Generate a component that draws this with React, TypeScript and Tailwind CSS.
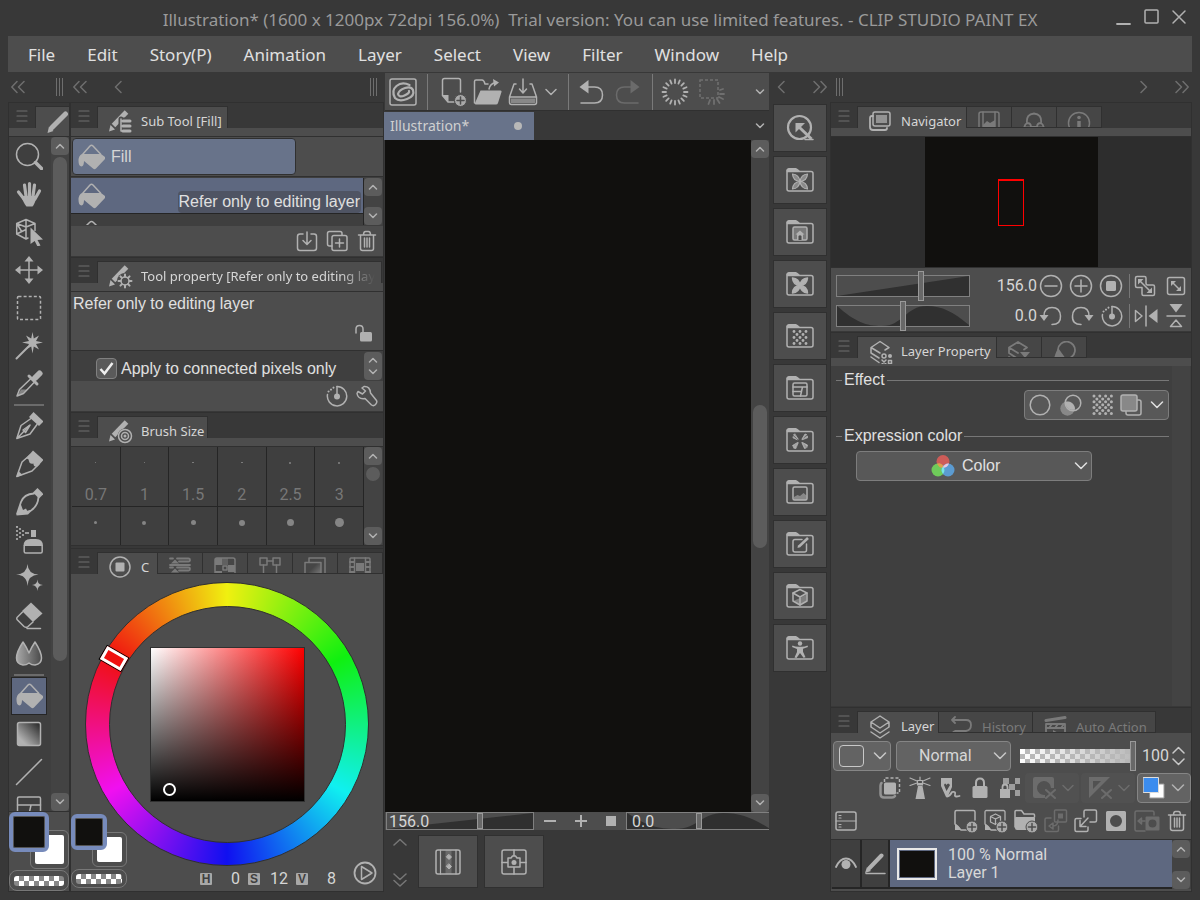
import React from 'react';

type IconProps = { w?: number; h?: number; className?: string; children: React.ReactNode };

const Icon = ({ w = 28, h = 28, className = '', children }: IconProps) => (
  <svg
    width={w}
    height={h}
    viewBox={`0 0 ${w} ${h}`}
    fill="none"
    stroke="currentColor"
    strokeWidth="1.5"
    strokeLinecap="round"
    strokeLinejoin="round"
    className={`shrink-0 ${className}`}
    aria-hidden="true"
  >
    {children}
  </svg>
);

const solid = { fill: 'currentColor', stroke: 'none' };

/* ---------- small glyphs ---------- */

const Chevron = ({ dir }: { dir: 'up' | 'down' }) => (
  <Icon w={10} h={6}>
    <path d={dir === 'up' ? 'M1.5 5 5 1.5 8.5 5' : 'M1.5 1 5 4.5 8.5 1'} />
  </Icon>
);

const BigChevron = () => (
  <Icon w={14} h={8}>
    <path d="M1.5 1 7 6.5 12.5 1" />
  </Icon>
);

const Left = () => <Icon w={8} h={14}><path d="M7 1.5 1.5 7 7 12.5" /></Icon>;
const Right = () => <Icon w={8} h={14}><path d="M1 1.5 6.5 7 1 12.5" /></Icon>;
const DoubleLeft = () => <Icon w={14} h={14}><path d="M6 1.5.8 7 6 12.5M13 1.5 7.5 7 13 12.5" /></Icon>;
const DoubleRight = () => <Icon w={14} h={14}><path d="M1 1.5 6.5 7 1 12.5M8 1.5 13.2 7 8 12.5" /></Icon>;
const Grip = () => (
  <Icon w={8} h={18}><path d="M.5 0v18M3.5 0v18M6.5 0v18" strokeWidth="1" strokeLinecap="butt" /></Icon>
);

const Plus = ({ x, y }: { x: number; y: number }) => (
  <g>
    <circle cx={x} cy={y} r="6" stroke="#4d4d4d" fill="#a8a8a8" strokeWidth="1" />
    <path d={`M${x - 3.5} ${y}h7M${x} ${y - 3.5}v7`} stroke="#4d4d4d" />
  </g>
);

const Dots = ({ x, y, step, n, r = 1.4 }: { x: number; y: number; step: number; n: number; r?: number }) => {
  const out = [];
  for (let i = 0; i < n; i++) {
    for (let j = 0; j < n; j++) {
      if ((i + j) % 2 === 0) out.push(<circle key={`${i}-${j}`} cx={x + i * step} cy={y + j * step} r={r} {...solid} />);
    }
  }
  return <>{out}</>;
};

const Bucket = () => (
  <Icon>
    <path d="M5.5 11.5 13 3q1.500-1.500 3 0l7.500 8" />
    <path d="M5 11h19l4 3q1 1 0 2L19 25.500q-1.500 1.500-3 0L7 18q0 5-2.500 5.500Q1.500 23 1.500 18 1.500 12.500 5 11z" {...solid} />
  </Icon>
);

const BucketTop = () => (
  <Icon h={6}><path d="M9 6l3.500-3.500q2-2 4 0L20 6" /></Icon>
);

/* ---------- tools ---------- */

const rays = (cx: number, cy: number, a: number, b: number, n: number) =>
  Array.from({ length: n }, (_, i) => {
    const t = (i * 2 * Math.PI) / n;
    return `M${cx + a * Math.cos(t)} ${cy + a * Math.sin(t)}L${cx + b * Math.cos(t)} ${cy + b * Math.sin(t)}`;
  }).join('');

const toolGroups: { name: string; icon: React.ReactNode; active?: boolean }[][] = [
  [
    { name: 'Zoom', icon: <Icon><circle cx="12.5" cy="12.5" r="11" /><path d="m20.500 20.500 6 6" strokeWidth="3.5" /></Icon> },
    {
      name: 'Move view',
      icon: (
        <Icon>
          <path d="M3.500 12 9 19M9.500 5l1.500 11M14.500 3.500V16M19.500 5 18 16M24.500 11 20 19" strokeWidth="3.2" />
          <path d="M7 16h14.500q-1 7-4 10.500h-6Q8.500 23 6 16z" {...solid} />
        </Icon>
      ),
    },
    {
      name: 'Operation',
      icon: (
        <Icon>
          <path d="m11 1.500 9 4v7M11 1.500l-9.300 4V16L11 21l2-1M1.700 5.500 11 9l9-3.500M11 1.500V20M1.700 16 11 11.500M1.700 5.500l5 8" />
          <path d="m15.500 9.500 12.500 12-5.500.5 3 5.500-3 1-2.800-5.500-4.200 3z" {...solid} />
        </Icon>
      ),
    },
    {
      name: 'Move layer',
      icon: (
        <Icon>
          <path d="M14 4v20M4 14h20" />
          <path d="m14 0 4.500 5.500h-9zM14 28l4.500-5.500h-9zM0 14l5.500-4.500v9zM28 14l-5.500-4.500v9z" {...solid} />
        </Icon>
      ),
    },
    { name: 'Selection area', icon: <Icon><rect x="2.5" y="2.5" width="23" height="23" rx="1" strokeDasharray="3 2.11" strokeLinecap="butt" /></Icon> },
    {
      name: 'Auto select',
      icon: (
        <Icon>
          <path d="M1.500 26.500 13 15" strokeWidth="2" />
          <path d="m17.500 0 1.300 6.500L24 3.500 21 9l7.500 1.500L21 12l3 5.500-5.200-3-1.300 7-1.300-7-5.200 3 3-5.500-7-1.500L14 9l-3-5.500 5.200 3z" {...solid} />
        </Icon>
      ),
    },
    {
      name: 'Eyedropper',
      icon: (
        <Icon>
          <path d="M16 8.500 4.500 19.500 2 26l6.500-2.500L19.500 12" />
          <path d="M6 19.500h7L8 24l-5.500 1.500z" {...solid} opacity=".6" />
          <path d="m14 6 8 8M19 9l5.500-5.500" strokeWidth="3" />
          <path d="m20 8 4.500-4.500" strokeWidth="6" />
        </Icon>
      ),
    },
  ],
  [
    {
      name: 'Pen',
      icon: (
        <Icon>
          <path d="M16 6.500 6 13.500 1.800 26.500 15 22l7-9.500M2 26.500 14 14" />
          <path d="m8 18 7-5-4.500 7.500z" />
          <path d="m18.500 0 10 9.500-4.500 4.500-10-9z" {...solid} />
        </Icon>
      ),
    },
    {
      name: 'Pencil',
      icon: (
        <Icon>
          <path d="M15 5 7 12 1.800 26.500 17 21l7-7" />
          <path d="m18 .5 10.500 9.500-6 6.500q-4.500 1-4-3-4 1-4.500-2.500T10 9.500z" {...solid} />
          <path d="m1.500 27 2-6 4 4z" {...solid} />
        </Icon>
      ),
    },
    {
      name: 'Brush',
      icon: (
        <Icon>
          <path d="M19 5.500Q9 6 6 14L2 26M23.500 9Q23 18 16 22.500L4 26" strokeWidth="1.8" />
          <path d="m1.500 27.500 4-12 2.500 6.500 3-1.500 1.500 3 4.500-1-4 4z" {...solid} />
          <path d="m22.500 0 6 6-4.500 4.500-6-6z" {...solid} />
        </Icon>
      ),
    },
    {
      name: 'Airbrush',
      icon: (
        <Icon>
          {[[2, 1], [2, 5], [2, 9], [2, 13], [5, 3], [5, 7], [5, 11], [8, 5], [8, 9], [11, 7], [13, 7]].map(([x, y]) => (
            <circle key={`${x}-${y}`} cx={x} cy={y} r="1.1" {...solid} />
          ))}
          <path d="M16 4h5v7h-5zM8.500 20q0-7 7-7h5.500q7 0 7 7z" {...solid} />
          <rect x="9.200" y="19" width="18" height="8" rx="1.500" />
        </Icon>
      ),
    },
    {
      name: 'Decoration',
      icon: (
        <Icon>
          <path d="M12.500 0q.5 10 11 10.500Q13 11 12.500 22 12 11 1 10.500 12 10 12.500 0zM22.500 15.500q0 5 5.500 5.500-5.500.5-5.500 6-.5-5.500-5.500-6 5-.5 5.500-5.500z" {...solid} />
        </Icon>
      ),
    },
    {
      name: 'Eraser',
      icon: (
        <Icon>
          <path d="M16 .5 27.500 11.500 18 20 7 9z" {...solid} />
          <path d="M7.500 10 2 15.500q-.5 1 0 2l7 7q2 1.500 4 0L18 20M12 26.500h13.500" />
        </Icon>
      ),
    },
    {
      name: 'Blend',
      icon: (
        <Icon>
          <defs>
            <linearGradient id="blend"><stop stopColor="#a8a8a8" /><stop offset="1" stopColor="#4a4a4a" /></linearGradient>
          </defs>
          <path d="M8 2Q1.500 12 1.500 18T8 25q3.500 0 6-2 2.500 2 6 2 6.500-1 6.500-7T20 2q-4 6-6 11Q12 8 8 2z" fill="url(#blend)" />
        </Icon>
      ),
    },
  ],
  [
    { name: 'Fill', icon: <Bucket />, active: true },
    {
      name: 'Gradient',
      icon: (
        <Icon>
          <defs>
            <linearGradient id="grad" x1="0" y1="1" x2="1" y2="0"><stop offset=".2" stopColor="#b1b1b1" /><stop offset=".9" stopColor="#333" /></linearGradient>
          </defs>
          <rect x="2.5" y="2.5" width="23" height="23" rx="2" fill="url(#grad)" />
        </Icon>
      ),
    },
    { name: 'Figure', icon: <Icon><path d="M1.500 26.500 26.500 1.500" /></Icon> },
  ],
];

/* ---------- palette header ---------- */

const PenBase = () => (
  <>
    <path d="m4.500 15.500 13-13.500" strokeWidth="5" strokeLinecap="butt" />
    <path d="M1.500 15 6 19.500 0 21.500z" {...solid} />
  </>
);

const icons = {
  subTool: <Icon w={24} h={24}><PenBase /><path d="M12 9v12h10M12 15h10M12 10h8" stroke="#4d4d4d" strokeWidth="5" /><path d="M12 9v12h2M12 11h2M12 16h2" /><path d="M14 11h7M14 16h7M14 21h7" strokeWidth="3" /></Icon>,
  toolProp: <Icon w={24} h={24}><PenBase /><circle cx="16" cy="16" r="8" fill="#4d4d4d" stroke="none" /><circle cx="16" cy="16" r="4" /><path d={rays(16, 16, 4.5, 6.5, 8)} strokeWidth="2" /></Icon>,
  brushSize: <Icon w={24} h={24}><PenBase /><circle cx="16" cy="16" r="7.5" fill="#4d4d4d" stroke="none" /><circle cx="16" cy="16" r="6.5" /><circle cx="16" cy="16" r="3.5" /><circle cx="16" cy="16" r="1.5" {...solid} /></Icon>,
  wheel: <Icon w={24} h={24}><circle cx="11" cy="11" r="10" /><rect x="6.5" y="6.5" width="9" height="9" rx="1" {...solid} /></Icon>,
  sliders: <Icon w={22} h={20}><path d="M1 1.500h3M8 1.500h11.500q1.500 0 1.500 1.500t-1.500 1.500H10M1 8h20M1 10.500h3M8 10.500h11.500q1.500 0 1.500 1.500t-1.500 1.500H10M1 17h20" strokeWidth="1.8" /><path d="m2 6.500 4-4 4 4zM2 15.500l4-4 4 4z" {...solid} /></Icon>,
  colorSet: <Icon w={22} h={20}><rect x="1" y="1" width="20" height="20" rx="2" /><path d="M1 1h7v7H1zM14 8h7v7h-7zM1 14h7v6H1z" {...solid} /><path d="M8 1h6v7H8z" {...solid} opacity=".5" /><rect x="9" y="9" width="4" height="4" /></Icon>,
  nodes: <Icon w={22} h={20}><rect x="1" y="1" width="7" height="7" /><rect x="14" y="1" width="7" height="7" /><path d="M8 4h6M4.500 8v9M17.500 8v9M1 17h7M14 17h7" /></Icon>,
  approx: (
    <Icon w={22} h={20}>
      <defs>
        <linearGradient id="approx" x1="0" y1="0" x2="1" y2="1"><stop offset=".4" stopColor="#464646" /><stop offset="1" stopColor="#888" /></linearGradient>
      </defs>
      <path d="M5 5V1h16v18h-4" />
      <rect x="1" y="5.5" width="16" height="16" fill="url(#approx)" />
    </Icon>
  ),
  film: <Icon w={22} h={20}><rect x="1" y="1" width="20" height="20" rx="1" /><path d="M5.500 1v19M16.500 1v19" /><path d="M1 5h4M1 10h4M1 15h4M17 5h4M17 10h4M17 15h4" strokeWidth="2" /><path d="M7 6h8v8H7z" {...solid} /></Icon>,
  navigator: <Icon w={24} h={24}><rect x="4" y="2" width="17" height="14" rx="2" /><rect x="7" y="5" width="11" height="8" {...solid} opacity=".7" /><path d="M4 6H3q-2 0-2 2v9q0 3 3 3h12q2 0 2-2" strokeWidth="1.8" /></Icon>,
  subView: <Icon w={22} h={20}><rect x="1" y="1" width="20" height="20" rx="2" /><path d="M5 1v18M17 1v18" /><path d="m5 14 4-4 3 2 5-3v9H5z" {...solid} /></Icon>,
  itemBank: <Icon w={22} h={20}><path d="M1 19q0-5 3-7Q3 3 11 2.500q8 .5 7 9.500 3 2 3 7M4 12q4 0 4 4h6q0-4 4-4M1 16.500h7M14 16.500h7" strokeWidth="1.8" /></Icon>,
  info: <Icon w={24} h={20}><circle cx="12" cy="12" r="10.5" /><path d="M12 10v9" strokeWidth="3.5" strokeLinecap="butt" /><circle cx="12" cy="6.500" r="1.8" {...solid} /></Icon>,
  layers: <Icon w={24} h={24}><path d="m11 1 9 6-9 6-9-6zM2 12l9 6 9-6M2 17l9 6 9-6M2 7v5M20 7v5" /></Icon>,
  layerProp: <Icon w={24} h={24}><path d="M11 13 2 7.500 11 1.500l9 6-4 2.500M2 8v5l8 5M2 17l8 5.500" /><circle cx="15" cy="16" r="2" /><circle cx="21" cy="16" r="2" {...solid} /><rect x="19.5" y="20.5" width="3" height="3" /><path d="m13 20 4 4M17 20l-4 4" /></Icon>,
  layerSearch: <Icon w={24} h={20}><path d="M11 12 2 6.500 11 1l9 5.500-3 2M2 7v5l9 6M2 16l4 3" strokeWidth="1.8" /><path d="M13 11h10l-5 6z" {...solid} /></Icon>,
  palette: <Icon w={24} h={20}><path d="M6 8.500a8.500 8.500 0 1 1 7 9" strokeWidth="1.8" /><path d="M6.500 7.500q-2 1-5 11.500h9.500l3-1z" {...solid} /></Icon>,
  history: <Icon w={24} h={20}><path d="M2 4h14q5 0 5 5t-5 6H5q-3 1-3 5M5 1 2 4l3 3" strokeWidth="1.8" /></Icon>,
  autoAction: <Icon w={24} h={20}><path d="m2 4.500 19-3" strokeWidth="3" /><path d="M2 8h19v12M2 8v12" strokeWidth="1.8" /><path d="m5 12 3-4M11 12l3-4M17 12l3-4M2 12h19" strokeWidth="1.8" /><path d="m9 14 7 4-7 4z" {...solid} /></Icon>,
};

type Tab = { icon: React.ReactNode; label?: string; width: string };

const MenuButton = () => (
  <button aria-label="Palette menu" className="flex w-[26px] shrink-0 justify-center pt-1 text-[#6e6e6e]">
    <Icon w={12} h={12}><path d="M1 1h10M1 6h10M1 11h10" strokeWidth="1.2" /></Icon>
  </button>
);

const ActiveTab = ({ tab, fade }: { tab: Tab; fade: boolean }) => (
  <button aria-label={tab.label} className={`relative h-[22px] shrink-0 border-x border-t border-[#303030] bg-[#4d4d4d] text-left text-[#b1b1b1] ${tab.width}`}>
    <span className="flex h-[30px] items-center gap-2 overflow-hidden whitespace-nowrap pl-[11px]">
      {tab.icon}
      <span className={`font-['Noto_Sans',sans-serif] text-[13px] text-[#d6d6d6] ${fade ? '[mask-image:linear-gradient(to_right,black_85%,transparent)]' : ''}`}>
        {tab.label}
      </span>
    </span>
  </button>
);

const IdleTab = ({ tab }: { tab: Tab }) => (
  <button
    aria-label={tab.label}
    className={`flex h-[22px] shrink-0 items-start gap-2 whitespace-nowrap border-b border-r border-t border-[#303030] bg-[#464646] text-[#7a7a7a] ${tab.label ? 'pl-[11px]' : 'justify-center'} ${tab.width}`}
  >
    <span className="h-5 overflow-hidden pt-1">{tab.icon}</span>
    {tab.label && <span className="pt-[5px] font-['Noto_Sans',sans-serif] text-[13px] leading-5">{tab.label}</span>}
  </button>
);

const PaletteHeader = ({ tabs, strip = true, fade = false }: { tabs: Tab[]; strip?: boolean; fade?: boolean }) => (
  <div className="shrink-0 border-t border-[#303030] bg-[#383838]">
    <div className="flex h-[25px] pt-[3px]">
      <MenuButton />
      {tabs.map((tab, i) => (i === 0 ? <ActiveTab key={i} tab={tab} fade={fade} /> : <IdleTab key={i} tab={tab} />))}
    </div>
    {strip && <div className="h-2 bg-[#4d4d4d]" />}
  </div>
);

const ScrollButton = ({ dir }: { dir: 'up' | 'down' }) => (
  <button aria-label={`Scroll ${dir}`} className="flex h-[18px] w-[18px] shrink-0 items-center justify-center rounded-sm bg-[#5c5c5c] text-[#b1b1b1]">
    <Chevron dir={dir} />
  </button>
);

const Scrollbar = () => (
  <div className="flex w-[18px] shrink-0 flex-col items-center justify-between bg-[#434343]">
    <ScrollButton dir="up" />
    <ScrollButton dir="down" />
  </div>
);

/* ---------- inputs ---------- */

const Wedge = () => (
  <svg viewBox="0 0 100 20" preserveAspectRatio="none" className="absolute inset-0 h-full w-full" aria-hidden="true">
    <path d="M0 20 100 0V20z" fill="#303030" />
  </svg>
);

const Wave = () => (
  <svg viewBox="0 0 100 20" preserveAspectRatio="none" className="absolute inset-0 h-full w-full" aria-hidden="true">
    <path d="M0 0C14 16 22 20 34 20 50 20 52 0 68 0 80 0 88 6 100 19v1H0z" fill="#303030" />
  </svg>
);

const rangeBase =
  'absolute inset-x-0 m-0 w-full appearance-none bg-transparent [&::-webkit-slider-thumb]:w-[6px] [&::-webkit-slider-thumb]:appearance-none [&::-webkit-slider-thumb]:border [&::-webkit-slider-thumb]:border-[#999] [&::-webkit-slider-thumb]:bg-[#686868]';
const tallThumb = 'h-[30px] -top-[5px] [&::-webkit-slider-thumb]:h-[30px]';
const shortThumb = 'h-[16px] top-0 [&::-webkit-slider-thumb]:h-[16px]';

const Swatches = ({ small = false }: { small?: boolean }) => (
  <div className={small ? 'w-[56px]' : 'w-[60px]'}>
    <div className={`relative ${small ? 'h-[53px]' : 'h-[57px]'}`}>
      <button
        aria-label="Sub color"
        className={`absolute bottom-0 right-0 rounded-md border border-[#777] bg-[#4d4d4d] p-1 ${small ? 'h-[35px] w-[35px]' : 'h-[39px] w-[39px]'}`}
      >
        <span className="block h-full w-full rounded-xs bg-white" />
      </button>
      <button
        aria-label="Main color"
        className={`absolute left-0 top-0 rounded-md border-4 border-[#778bbb] bg-[#11100e] ring-1 ring-inset ring-[#555] ${small ? 'h-[36px] w-[36px]' : 'h-[40px] w-[40px]'}`}
      />
    </div>
    <button aria-label="Transparent color" className={`block w-full rounded-lg border border-[#777] bg-[#4d4d4d] px-1 ${small ? 'mt-[2px] h-[19px]' : 'mt-px h-[21px]'}`}>
      <span className="block h-[10px] w-full rounded-[3px] bg-[repeating-conic-gradient(#888_0_25%,#fff_0_50%)] bg-[length:10px_10px]" />
    </button>
  </div>
);

/* ---------- columns ---------- */

const ToolColumn = () => (
  <div className="flex w-[62px] shrink-0 flex-col">
    <div className="flex h-[30px] shrink-0 items-center justify-between pl-[3px] pr-1.5 text-[#6e6e6e]">
      <DoubleLeft />
      <Grip />
    </div>
    <div className="flex min-h-0 flex-1 flex-col border-x border-b border-[#303030] bg-[#4d4d4d]">
      <div className="border-t border-[#303030] bg-[#383838]">
        <div className="flex h-[25px] pt-[3px]">
          <MenuButton />
          <button aria-label="Tool" className="relative flex h-[22px] flex-1 items-start justify-end border-l border-t border-[#303030] bg-[#4d4d4d] pt-1 text-[#b1b1b1]">
            <Icon w={22} h={22}><path d="M5 16.500 18.500 3" strokeWidth="5" strokeLinecap="round" /><path d="m2 15.500 4.500 4.500L.5 22z" {...solid} /></Icon>
          </button>
        </div>
        <div className="h-2 bg-[#4d4d4d]" />
      </div>
      <div className="flex min-h-0 flex-1 border-t border-[#303030] bg-[#3f3f3f]">
        <div className="flex flex-1 flex-col overflow-hidden pl-[2px] pr-1 text-[#b1b1b1]">
          {toolGroups.map((group, i) => (
            <React.Fragment key={i}>
              {i > 0 && <div className="mx-[3px] mt-px h-[3px] shrink-0 border-t-2 border-[#6b6b6b]" />}
              {group.map((tool) => (
                <button
                  key={tool.name}
                  aria-label={tool.name}
                  className={`flex h-[38px] shrink-0 items-center justify-center ${tool.active ? 'border border-[#252525] bg-[#5e6880]' : ''}`}
                >
                  {tool.icon}
                </button>
              ))}
            </React.Fragment>
          ))}
          <button aria-label="Frame Border" className="flex shrink-0 justify-center pt-[5px]">
            <Icon w={26} h={24}><rect x="1.5" y="1" width="23" height="22" rx="1.5" /><path d="M1.500 9h23M15 9l-3 14" /></Icon>
          </button>
        </div>
        <div className="flex w-[18px] shrink-0 flex-col items-center bg-[#434343] pr-px">
          <ScrollButton dir="up" />
          <div className="mb-[132px] mt-[2px] w-[14px] flex-1 rounded-full bg-[#5c5c5c]" />
          <ScrollButton dir="down" />
        </div>
      </div>
      <div className="shrink-0 border-t border-[#303030]">
        <Swatches />
      </div>
    </div>
  </div>
);

const footerButton = 'flex w-[22px] items-center justify-center text-[#b1b1b1]';

const Trash = () => (
  <Icon w={20} h={22}>
    <path d="M1.500 5h17M6.500 5q0-3.500 2-3.500h3q2 0 2 3.500M3.500 5v13.500q0 2 2 2h9q2 0 2-2V5M7.500 8v9M10 8v9M12.500 8v9" />
  </Icon>
);

const ResetDial = () => (
  <Icon w={22} h={22}>
    <path d="M11 1.500a9.700 9.700 0 1 1-9.500 8" />
    <path d="M2.500 6.500 9 1.500" strokeDasharray=".1 3" strokeWidth="2" />
    <path d="M11 1.500V11" />
    <circle cx="11" cy="11.5" r="3" {...solid} />
  </Icon>
);

const SubToolPanel = () => (
  <section className="mb-px bg-[#4d4d4d]">
    <PaletteHeader tabs={[{ icon: icons.subTool, label: 'Sub Tool [Fill]', width: 'w-[131px]' }]} />
    <div className="h-[41px] border-y border-[#303030] p-px">
      <button className="flex h-[37px] w-[224px] items-center gap-1.5 rounded-sm border border-[#303030] bg-[#68738a] pl-1 text-[#b1b1b1]">
        <Bucket />
        <span className="font-['Liberation_Sans',sans-serif] text-[16px] text-[#d6d6d6]">Fill</span>
      </button>
    </div>
    <div className="flex h-[49px] bg-[#3f3f3f] pb-px pr-px pt-px">
      <div className="flex flex-1 flex-col overflow-hidden border-r border-[#252525]">
        <button className="flex h-[36px] shrink-0 items-center justify-between border-b border-[#252525] bg-[#5e6880] pl-[6px] pr-[2px] text-[#b1b1b1]">
          <Bucket />
          <span className="mt-3 rounded-sm bg-[#4f5463] px-px font-['Liberation_Sans',sans-serif] text-[16px] leading-[22px] text-[#e0e0e0]">
            Refer only to editing layer
          </span>
        </button>
        <div className="pl-[6px] pt-[6px] text-[#b1b1b1]"><BucketTop /></div>
      </div>
      <Scrollbar />
    </div>
    <div className="flex h-[30px] items-center justify-end gap-2 pr-[5px]">
      <button aria-label="Download sub tool" className={footerButton}>
        <Icon w={22} h={22}><path d="M7 4H4Q1.500 4 1.500 6.500V18Q1.500 20.500 4 20.500h14q2.500 0 2.500-2.500V6.500Q20.500 4 18 4h-3M11 2v12M7 10.500l4 4 4-4" /></Icon>
      </button>
      <button aria-label="Duplicate sub tool" className={footerButton}>
        <Icon w={22} h={22}><rect x="6" y="5.5" width="15" height="15" rx="2" /><path d="M6 16H3.500Q1.500 16 1.500 14V3.500Q1.500 1.500 3.500 1.500H14q2 0 2 2V5M13.500 9v8M9.500 13h8" /></Icon>
      </button>
      <button aria-label="Delete sub tool" className={footerButton}><Trash /></button>
    </div>
  </section>
);

const ToolPropertyPanel = () => (
  <section className="mb-px bg-[#4d4d4d]">
    <PaletteHeader fade tabs={[{ icon: icons.toolProp, label: 'Tool property [Refer only to editing lay', width: 'w-[285px]' }]} />
    <div className="flex h-[60px] flex-col justify-between border-y border-[#303030] pb-2 pl-[2px] pr-[9px] pt-px">
      <span className="font-['Liberation_Sans',sans-serif] text-[16px] leading-[22px] text-[#e0e0e0]">Refer only to editing layer</span>
      <button aria-label="Lock" className="self-end text-[#b1b1b1]">
        <Icon w={20} h={18}><path d="M2 9V5q0-3.500 3.500-3.500T9 5v4" /><rect x="6" y="8" width="12" height="9.5" rx="1.5" {...solid} /></Icon>
      </button>
    </div>
    <div className="flex h-[30px] items-center bg-[#3f3f3f] pl-[25px] pr-px">
      <label className="flex flex-1 items-center gap-1 pt-[5px] font-['Liberation_Sans',sans-serif] text-[16px] text-[#e0e0e0]">
        <span className="relative flex h-[21px] w-[21px]">
          <input type="checkbox" defaultChecked className="h-full w-full appearance-none rounded-sm border border-[#808080] bg-[#5a5a5a]" />
          <svg viewBox="0 0 21 21" className="pointer-events-none absolute inset-0" fill="none" stroke="#eee" strokeWidth="2.5" aria-hidden="true">
            <path d="m4.500 11 4 4.500L16.500 5" />
          </svg>
        </span>
        Apply to connected pixels only
      </label>
      <div className="flex h-7 w-[18px] flex-col items-center justify-evenly rounded-sm bg-[#5c5c5c] text-[#b1b1b1]">
        <button aria-label="Previous"><Chevron dir="up" /></button>
        <button aria-label="Next"><Chevron dir="down" /></button>
      </div>
    </div>
    <div className="flex h-[30px] items-center justify-end gap-2 pr-[5px]">
      <button aria-label="Reset settings" className={footerButton}><ResetDial /></button>
      <button aria-label="Sub tool detail" className={footerButton}>
        <Icon w={22} h={22}><path d="M8 1.500Q14 1 14.500 8l6 7.500q1 2-1 4t-4 .5L9 13.500Q2 14.500 1 8.500l1-2L6.500 9 9.500 6 6 3z" /></Icon>
      </button>
    </div>
  </section>
);

const brushRows: { size?: string; dot: string }[][] = [
  [
    { size: '0.7', dot: 'h-px w-px' }, { size: '1', dot: 'h-px w-px' }, { size: '1.5', dot: 'h-px w-[2px]' },
    { size: '2', dot: 'h-px w-[2px]' }, { size: '2.5', dot: 'h-[2px] w-[2px]' }, { size: '3', dot: 'h-[2px] w-[2px]' },
  ],
  [
    { dot: 'h-[3px] w-[3px]' }, { dot: 'h-1 w-1' }, { dot: 'h-[5px] w-[5px]' },
    { dot: 'h-1.5 w-1.5' }, { dot: 'h-[7px] w-[7px]' }, { dot: 'h-[9px] w-[9px]' },
  ],
];

const BrushSizePanel = () => (
  <section className="mb-[2px] bg-[#4d4d4d]">
    <PaletteHeader tabs={[{ icon: icons.brushSize, label: 'Brush Size', width: 'w-[111px]' }]} />
    <div className="flex h-[100px] border-y border-[#303030] bg-[#3f3f3f] pl-px pr-px">
      <div className="flex flex-1 flex-col">
        {brushRows.map((row, i) => (
          <div key={i} className={`grid grid-cols-6 ${i === 0 ? 'h-[60px] border-b border-[#252525]' : 'flex-1'}`}>
            {row.map((cell, j) => (
              <button key={j} aria-label={`Brush ${i * 6 + j + 1}`} className="flex flex-col items-center border-r border-[#252525] text-[#777]">
                <span className="flex h-[31px] items-center"><span className={`rounded-full bg-[#858585] ${cell.dot}`} /></span>
                {cell.size && <span className="pt-[5px] font-[Roboto,sans-serif] text-[16px] leading-6">{cell.size}</span>}
              </button>
            ))}
          </div>
        ))}
      </div>
      <div className="flex w-[18px] shrink-0 flex-col bg-[#434343]">
        <ScrollButton dir="up" />
        <div className="mx-[2px] mb-auto mt-[2px] h-[14px] rounded-full bg-[#5c5c5c]" />
        <ScrollButton dir="down" />
      </div>
    </div>
  </section>
);

const HsvField = ({ name, value }: { name: string; value: string }) => (
  <label className="flex items-center gap-[3px]">
    <span className="flex h-3 w-3 items-center justify-center rounded-[1px] bg-[#a8a8a8] font-['Liberation_Sans',sans-serif] text-[12px] font-bold leading-3 text-[#3f3f3f]">{name}</span>
    <input type="text" defaultValue={value} className="w-[29px] bg-transparent pr-1 text-right font-[Roboto,sans-serif] text-[16px] leading-5 text-[#d6d6d6]" />
  </label>
);

const ColorPanel = () => (
  <section className="flex min-h-0 flex-1 flex-col border-b border-[#303030] bg-[#4d4d4d]">
    <PaletteHeader
      strip={false}
      tabs={[
        { icon: icons.wheel, label: 'C', width: 'w-[61px]' },
        { icon: icons.sliders, width: 'w-[45px]' },
        { icon: icons.colorSet, width: 'w-[45px]' },
        { icon: icons.nodes, width: 'w-[45px]' },
        { icon: icons.approx, width: 'w-[45px]' },
        { icon: icons.film, width: 'w-[45px]' },
      ]}
    />
    <div className="relative flex flex-1 flex-col items-center pt-2">
      <div className="relative flex h-[284px] w-[284px] items-center justify-center rounded-full border border-[#303030] bg-[conic-gradient(from_300deg,#f01010,#f0f010,#10f010,#10f0f0,#1010f0,#f010f0,#f01010)]">
        <div className="flex h-[237px] w-[237px] items-center justify-center rounded-full border border-[#303030] bg-[#4d4d4d]">
          <div className="relative h-[155px] w-[155px] border border-[#303030] bg-[linear-gradient(to_top,#000,transparent),linear-gradient(to_right,#fff,#f00)]">
            <span className="absolute bottom-[5px] left-[12px] h-[13px] w-[13px] rounded-full border-2 border-white" />
          </div>
        </div>
        <span className="absolute left-[16px] top-[68px] h-[15px] w-[24px] rotate-[30deg] border-[3px] border-white bg-[#f01010] ring-1 ring-black" />
      </div>
      <div className="absolute bottom-[3px] left-0"><Swatches small /></div>
      <div className="absolute bottom-[2px] right-[43px] flex gap-1">
        <HsvField name="H" value="0" />
        <HsvField name="S" value="12" />
        <HsvField name="V" value="8" />
      </div>
      <button aria-label="Switch color space" className="absolute bottom-[6px] right-[6px] text-[#b1b1b1]">
        <Icon w={24} h={24}><circle cx="12" cy="12" r="10.5" strokeWidth="1.8" /><path d="M8.500 5.500v13l10.500-6.500z" /></Icon>
      </button>
    </div>
  </section>
);

const PaletteColumn = () => (
  <div className="flex w-[314px] shrink-0 flex-col">
    <div className="flex h-[30px] shrink-0 items-center pl-[3px] pr-1.5 text-[#6e6e6e]">
      <DoubleLeft />
      <span className="ml-[27px] flex-1"><Left /></span>
      <Grip />
    </div>
    <div className="flex min-h-0 flex-1 flex-col border-x border-[#303030]">
      <SubToolPanel />
      <ToolPropertyPanel />
      <BrushSizePanel />
      <ColorPanel />
    </div>
  </div>
);

/* ---------- canvas ---------- */

const CommandBar = () => (
  <div className="flex h-[38px] items-center border-b border-[#303030] bg-[#4d4d4d] pl-1 text-[#b1b1b1]">
    <button aria-label="Clip Studio">
      <Icon><rect x="1" y="1" width="26" height="26" rx="2" /><path d="M20.500 7Q13 3.500 7.500 8T6 20q4 4 12 1t6-9q-2-4-8-2t-7 6q1 4 6.500 1.500T20 13" strokeWidth="2.2" /></Icon>
    </button>
    <span className="ml-[10px] h-[36px] border-l border-[#7a7a7a]" />
    <button aria-label="New" className="ml-[12px]">
      <Icon w={28} h={30}><path d="M20.500 15V3.500q0-2-2-2h-14q-2 0-2 2v15L8 25h6" /><path d="M2 18h6.500v7z" {...solid} /><Plus x={20.5} y={23.5} /></Icon>
    </button>
    <button aria-label="Open" className="ml-[5px]">
      <Icon w={29} h={28}><path d="M1.500 25V3.500q0-1.500 1.500-1.500h6q2 0 3 4h3" /><path d="M16 11q1-5.500 7-6.500" /><path d="m20 1 6 3.500-5 4z" {...solid} /><path d="M7.500 12.500h20q1.500 0 1 1.500l-3.500 11q-.5 1.500-2 1.500H3q-1.500 0-1-1.500z" {...solid} /></Icon>
    </button>
    <button aria-label="Save" className="ml-[6px]">
      <Icon w={30} h={28}><path d="M8 6H6L1.500 19v5.500q0 2 2 2h23q2 0 2-2V19L24 6h-2M15 1v13M11.500 11l3.500 4 3.500-4M1.500 19h27" /><path d="M3 20.500h24v4.500H3z" {...solid} opacity=".6" /></Icon>
    </button>
    <button aria-label="Save options" className="ml-[7px]"><Icon w={12} h={8}><path d="M1 1.500 6 6.500l5-5" /></Icon></button>
    <span className="ml-[11px] h-[36px] border-l border-[#7a7a7a]" />
    <button aria-label="Undo" className="ml-[10px]">
      <Icon w={26} h={26}><path d="M6 8h9.500q8 0 8 8t-8 8H2" /><path d="M.5 8 9.500 1v13.500z" {...solid} /></Icon>
    </button>
    <button aria-label="Redo" disabled className="ml-[9px] text-[#6b6b6b]">
      <Icon w={26} h={26}><path d="M20 8h-9.500q-8 0-8 8t8 8H24" /><path d="M25.500 8 16.500 1v13.500z" {...solid} /></Icon>
    </button>
    <span className="ml-[12px] h-[36px] border-l border-[#7a7a7a]" />
    <button aria-label="Clear" className="ml-[8px]">
      <Icon><path d={rays(14, 14, 9, 12.5, 16)} strokeWidth="1.8" /></Icon>
    </button>
    <button aria-label="Clear outside selection" disabled className="ml-[9px] text-[#707070]">
      <Icon><rect x="2" y="2" width="18" height="18" strokeDasharray="3 2" strokeLinecap="butt" /><path d="M22 12l3-1M22 16h4M21 19l4 2M19 21l2.500 4M16 22v4M12 22l-1.500 4" strokeWidth="1.8" /></Icon>
    </button>
    <button aria-label="More commands" className="ml-auto pr-1"><Chevron dir="down" /></button>
  </div>
);

const CanvasColumn = () => (
  <div className="flex min-w-0 flex-1 flex-col pt-px">
    <div className="mx-px"><CommandBar /></div>
    <div className="flex h-[29px] shrink-0 items-center justify-between pr-[5px] text-[#b1b1b1]">
      <button className="flex h-[28px] w-[150px] items-center justify-between bg-[#68738a] pl-[6px] pr-3 font-['Noto_Sans',sans-serif] text-[14px] text-[#d0d0d0]">
        Illustration*
        <span className="h-2 w-2 rounded-full bg-[#b8b8b8]" />
      </button>
      <button aria-label="Tabs"><Chevron dir="down" /></button>
    </div>
    <div className="mx-px flex min-h-0 flex-1">
      <div className="flex-1 bg-[#11100e]" />
      <div className="flex w-[18px] flex-col items-center bg-[#434343]">
        <ScrollButton dir="up" />
        <div className="flex w-[14px] flex-1 flex-col justify-center">
          <div className="h-[143px] rounded-full bg-[#5c5c5c]" />
        </div>
        <ScrollButton dir="down" />
      </div>
    </div>
    <div className="mx-px flex h-[18px] shrink-0 overflow-hidden bg-[#4d4d4d] pl-px font-[Roboto,sans-serif] text-[16px] text-[#d6d6d6]">
      <div className="relative w-[148px] shrink-0 border border-[#808080]">
        <Wedge />
        <input type="range" aria-label="Canvas zoom" min={0} max={100} defaultValue={64} className={`${rangeBase} ${shortThumb}`} />
        <input type="text" aria-label="Zoom value" defaultValue="156.0" className="absolute left-[2px] top-0 h-4 w-[60px] bg-transparent leading-4" />
      </div>
      <div className="flex flex-1 items-center justify-between px-[10px] text-[#b1b1b1]">
        <button aria-label="Zoom out"><Icon w={12} h={12}><path d="M0 6h12" strokeWidth="2" strokeLinecap="butt" /></Icon></button>
        <button aria-label="Zoom in"><Icon w={12} h={12}><path d="M0 6h12M6 0v12" strokeWidth="2" strokeLinecap="butt" /></Icon></button>
        <button aria-label="Fit" className="h-[10px] w-[10px] bg-[#b1b1b1]" />
      </div>
      <div className="relative w-[143px] shrink-0 border border-r-0 border-[#808080]">
        <Wave />
        <input type="range" aria-label="Canvas rotation" min={0} max={100} defaultValue={51} className={`${rangeBase} ${shortThumb}`} />
        <input type="text" aria-label="Rotation value" defaultValue="0.0" className="absolute left-[5px] top-0 h-4 w-[50px] bg-transparent leading-4" />
      </div>
    </div>
    <div className="flex h-[62px] shrink-0 items-start gap-[6px] pl-[9px] pt-[5px] text-[#b1b1b1]">
      <div className="mr-[5px] flex h-[52px] w-[14px] flex-col items-center justify-between pt-[3px] text-[#777]">
        <button aria-label="Expand"><Icon w={14} h={8}><path d="M1 7 7 1.500 13 7" /></Icon></button>
        <button aria-label="Collapse"><Icon w={14} h={14}><path d="M1 1l6 5.500L13 1M1 7.500 7 13l6-5.500" /></Icon></button>
      </div>
      <button aria-label="Timeline" className="flex h-[53px] w-[60px] items-center justify-center border border-[#303030] bg-[#4d4d4d]">
        <Icon w={26} h={26}><rect x="1" y="1" width="24" height="24" rx="2" /><path d="M5.500 1v24M21 1v24" strokeWidth="1.2" /><path d="M10.500 1h6v24h-6z" {...solid} opacity=".3" /><path d="M14 5.500 16.500 8 14 10.500 11.500 8zM14 15l2.500 2.500L14 20l-2.500-2.500z" fill="currentColor" strokeWidth="1" /></Icon>
      </button>
      <button aria-label="Camera" className="flex h-[53px] w-[60px] items-center justify-center border border-[#303030] bg-[#4d4d4d]">
        <Icon w={26} h={26}><rect x="1" y="1" width="24" height="24" rx="2" /><path d="M13 1v6M13 19v6M1 13.500h6M19 13.500h6M7 9h3l1.500-2h3L16 9h3v9H7z" /><circle cx="13" cy="13.5" r="2.5" {...solid} /></Icon>
      </button>
    </div>
  </div>
);

/* ---------- material shortcuts ---------- */

const Folder = ({ children }: { children: React.ReactNode }) => (
  <Icon w={28} h={26}>
    <path d="M.8 5V3q0-2 2-2h7q1 0 2.500 1.500L15 5z" {...solid} />
    <path d="M1 3v19q0 2 2 2h22q2 0 2-2V6.500q0-2-2-2H2" />
    {children}
  </Icon>
);

const petals = 'M14 14.500Q7 14 6.500 7 13 7.500 14 14.500zM14 14.500Q15 7.500 21.500 7 21 14 14 14.500zM14 14.500Q7 15 6.500 22 13 21.500 14 14.500zM14 14.500Q15 21.500 21.500 22 21 15 14 14.500z';

const materials = [
  { name: 'Quick Access', icon: <Icon><circle cx="13.5" cy="13.5" r="11.5" strokeWidth="2.2" /><path d="m13 13 12.500 12" strokeWidth="3" strokeLinecap="butt" /><path d="M9.500 9h9.500l-9.500 9.500z" {...solid} /><path d="M19 25.500h8" /></Icon> },
  { name: 'All materials', icon: <Folder><path d={petals} fill="#8a8a8a" strokeWidth="1.2" /></Folder> },
  { name: 'Home materials', icon: <Folder><rect x="7" y="8" width="14" height="13" rx="1.5" fill="#7a7a7a" /><path d="M14 11.500 9.500 15.500H11V21h6v-5.500h1.500z" {...solid} /><path d="M12.500 21v-4q1.500-1.500 3 0v4z" fill="#4d4d4d" stroke="none" /></Folder> },
  { name: 'Color pattern', icon: <Folder><path d={petals} fill="currentColor" /></Folder> },
  { name: 'Monochrome pattern', icon: <Folder><Dots x={8} y={8.5} step={3} n={5} r={1.4} /></Folder> },
  { name: 'Manga material', icon: <Folder><rect x="7" y="8" width="14" height="13" rx="1.5" /><path d="M7 12h14M7 16.500h8.500M16.500 12l-2 9" /></Folder> },
  { name: 'Effect lines', icon: <Folder><path d="m12 12-4.500-4 1-1zM11 12.500 7 9.500v1zM16 12l3-5 1.500.5zM16.500 12.500l5-3.500v1.500zM12 16l-4.500 5 2 .5zM11.500 15.500l-5 3 1 1.500zM16 16l2.500 5.500 1.500-.5zM16.500 15.500l5 2.500-.5 2z" fill="currentColor" strokeWidth=".8" /></Folder> },
  { name: 'Image material', icon: <Folder><rect x="7" y="8" width="14" height="13" rx="1.5" /><path d="m8 18 3.500-2 2.500 1 3.500-3 3 2.500v4.500H8z" {...solid} opacity=".6" /></Folder> },
  { name: 'Download', icon: <Folder><path d="M16 8.500H9q-2 0-2 2V19q0 2 2 2h9.500q2 0 2-2v-6" /><path d="M13 15.500 22 7" strokeWidth="2.5" strokeLinecap="butt" /><path d="m11.500 17 .5-3 2.500 2z" {...solid} /></Folder> },
  { name: '3D', icon: <Folder><path d="m14 6.500 7 3.500v8l-7 4-7-4v-8z" /><path d="m7 10 7 4 7-4M14 14v8" /><path d="m14 15 6.500-3.500V18L14 21.500 7.500 18z" {...solid} opacity=".5" /></Folder> },
  { name: 'Pose', icon: <Folder><circle cx="14" cy="8.5" r="2.2" {...solid} /><path d="M6.500 10.500q3 1.500 7.500 1.200 4.500.3 7.500-1.200l.5 1.500-5 1.800v3l2.500 5.500-2 .5L14 18l-3.500 5-2-.5 2.500-5.500v-3L6 12z" {...solid} /></Folder> },
];

const MaterialColumn = () => (
  <div className="flex w-[60px] shrink-0 flex-col">
    <div className="flex h-[30px] shrink-0 items-center justify-between pl-[7px] pr-[3px] text-[#6e6e6e]">
      <Left />
      <DoubleRight />
    </div>
    <div className="flex flex-col gap-1 px-[3px] pt-[2px]">
      {materials.map((m) => (
        <button key={m.name} aria-label={m.name} className="flex h-12 items-center justify-center border border-[#303030] bg-[#4d4d4d] text-[#b1b1b1]">
          {m.icon}
        </button>
      ))}
    </div>
  </div>
);

/* ---------- right column ---------- */

const numberField = 'bg-transparent text-right font-[Roboto,sans-serif] text-[16px] text-[#d6d6d6]';

const NavigatorPanel = () => (
  <section className="mb-px bg-[#4d4d4d]">
    <PaletteHeader
      tabs={[
        { icon: icons.navigator, label: 'Navigator', width: 'w-[110px]' },
        { icon: icons.subView, width: 'w-[45px]' },
        { icon: icons.itemBank, width: 'w-[45px]' },
        { icon: icons.info, width: 'w-[45px]' },
      ]}
    />
    <div className="flex h-[132px] justify-center border-y border-[#303030] bg-[#2d2d2d]">
      <div className="flex w-[173px] items-center justify-center bg-[#11100e]">
        <div className="h-[47px] w-[26px] border border-t-2 border-[#f00]" />
      </div>
    </div>
    <div className="flex h-[63px] items-start pl-[5px] pr-[5px] text-[#b1b1b1]">
      <div className="flex w-[134px] shrink-0 flex-col gap-[8px] pt-[7px]">
        <div className="relative h-[22px] border border-[#808080]">
          <Wedge />
          <input type="range" aria-label="Zoom" min={0} max={100} defaultValue={64} className={`${rangeBase} ${tallThumb}`} />
        </div>
        <div className="relative h-[22px] border border-[#808080]">
          <Wave />
          <input type="range" aria-label="Rotation" min={0} max={100} defaultValue={50} className={`${rangeBase} ${tallThumb}`} />
        </div>
      </div>
      <div className="flex flex-1 flex-col">
        <div className="flex h-[36px] items-center justify-end">
          <input type="text" aria-label="Zoom percent" defaultValue="156.0" className={`${numberField} w-[60px]`} />
          <div className="ml-[2px] flex w-[84px] items-center justify-between">
            <button aria-label="Zoom out"><Icon w={24} h={24}><circle cx="12" cy="12" r="10.5" /><path d="M6 12h12" /></Icon></button>
            <button aria-label="Zoom in"><Icon w={24} h={24}><circle cx="12" cy="12" r="10.5" /><path d="M6 12h12M12 6v12" /></Icon></button>
            <button aria-label="100%"><Icon w={24} h={24}><circle cx="12" cy="12" r="10.5" /><rect x="7" y="7" width="10" height="10" rx="1.5" {...solid} /></Icon></button>
          </div>
          <span className="ml-[6px] h-6 border-l border-[#777]" />
          <button aria-label="Fitting" className="ml-1"><Icon w={22} h={22}><path d="M12 8V3q0-1.500-1.500-1.500H3Q1.500 1.500 1.500 3v8q0 1.500 1.500 1.500h5V19q0 1.500 1.500 1.500H19q1.500 0 1.500-1.500v-7.500Q20.500 10 19 10h-5.500Q12 10 12 8z" /><path d="m5 5 11 11" /><path d="M4 4h5.500L4 9.500zM18 18h-5.500l5.500-5.500z" {...solid} /></Icon></button>
          <button aria-label="Fit to navigator" className="ml-[10px]"><Icon w={20} h={20}><rect x="1.5" y="1.5" width="17" height="17" rx="2" /><path d="m6 6 8 8" /><path d="M5 5h5l-5 5zM15 15h-5l5-5z" {...solid} /></Icon></button>
        </div>
        <div className="flex h-[24px] items-center justify-end">
          <input type="text" aria-label="Rotation degrees" defaultValue="0.0" className={`${numberField} w-[60px]`} />
          <div className="ml-[2px] flex w-[84px] items-center justify-between">
            <button aria-label="Rotate left"><Icon w={24} h={22}><path d="M5 11Q5 2.500 13 2.500t8.500 8.500-8.500 8.500" /><path d="M.5 10h9L5 16z" {...solid} /></Icon></button>
            <button aria-label="Rotate right"><Icon w={24} h={22}><path d="M19 11q0-8.500-8-8.500T2.500 11 11 19.500" /><path d="M23.500 10h-9l4.500 6z" {...solid} /></Icon></button>
            <button aria-label="Reset rotation"><ResetDial /></button>
          </div>
          <span className="ml-[6px] h-6 border-l border-[#777]" />
          <button aria-label="Flip horizontal" className="ml-1"><Icon w={24} h={22}><path d="M12 1v20M1.500 5.500v11l6.500-5.500z" /><path d="M23.500 4v14L14.500 11z" {...solid} /></Icon></button>
          <button aria-label="Flip vertical" className="ml-[8px]"><Icon w={20} h={24}><path d="M1 12h18M4.500 22.500h11L10 16z" /><path d="M3.500 0h13L10 8.500z" {...solid} /></Icon></button>
        </div>
      </div>
    </div>
  </section>
);

const Legend = ({ children }: { children: string }) => (
  <div className="flex items-center gap-[2px] font-['Liberation_Sans',sans-serif] text-[16px] leading-5 text-[#e0e0e0]">
    <span className="w-1.5 border-t border-[#777]" />
    {children}
    <span className="flex-1 border-t border-[#777]" />
  </div>
);

const LayerPropertyPanel = () => (
  <section className="mb-px flex min-h-0 flex-1 flex-col bg-[#4d4d4d]">
    <PaletteHeader
      tabs={[
        { icon: icons.layerProp, label: 'Layer Property', width: 'w-[140px]' },
        { icon: icons.layerSearch, width: 'w-[45px]' },
        { icon: icons.palette, width: 'w-[45px]' },
      ]}
    />
    <div className="flex flex-1 bg-[#3f3f3f]">
      <div className="flex-1 pl-[5px] pr-[3px] pt-1">
        <Legend>Effect</Legend>
        <div className="mb-[6px] ml-auto flex h-[30px] w-[145px] items-center justify-between rounded-sm border border-[#7d7d7d] bg-[#585858] pl-1 pr-[4px] text-[#b1b1b1]">
          <button aria-label="Border effect"><Icon w={22} h={22}><circle cx="11" cy="11" r="9.8" /></Icon></button>
          <button aria-label="Extract line"><Icon w={24} h={22}><circle cx="8.5" cy="14.5" r="7.2" {...solid} opacity=".55" /><circle cx="14" cy="9" r="7.8" /><path d="M6.500 8a7.500 7.500 0 0 1 9.500 7.500A7.500 7.500 0 0 1 6.500 8z" {...solid} /></Icon></button>
          <button aria-label="Tone"><Icon w={22} h={22}><Dots x={3} y={2} step={2.9} n={7} r={1.5} /></Icon></button>
          <button aria-label="Layer color"><Icon w={22} h={22}><path d="M17.500 6H19q2 0 2 2v11q0 2-2 2H8q-2 0-2-2v-1.500" /><rect x="1" y="1" width="16" height="16" rx="2" fill="#888" /></Icon></button>
          <button aria-label="More effects" className="text-[#e0e0e0]"><BigChevron /></button>
        </div>
        <Legend>Expression color</Legend>
        <label className="relative ml-[20px] mt-[5px] flex h-[30px] w-[236px] items-center">
          <select aria-label="Expression color" className="h-full w-full appearance-none rounded-sm border border-[#7d7d7d] bg-[#585858] pl-[105px] font-['Liberation_Sans',sans-serif] text-[16px] text-[#e0e0e0]">
            <option>Color</option>
            <option>Gray</option>
            <option>Monochrome</option>
          </select>
          <svg width="24" height="24" viewBox="0 0 24 24" className="pointer-events-none absolute left-[75px]" aria-hidden="true">
            <circle cx="12" cy="7.5" r="6.5" fill="#cd5c58" />
            <circle cx="7" cy="16" r="6.5" fill="#6fcb5a" />
            <circle cx="17" cy="16" r="6.5" fill="#5b9bd1" />
            <path d="M6 10q3.500-2 6.500 2-1 2-1.500 2Q8 13.500 6 10z" fill="#dba04f" />
            <path d="M12 13q2-4 6-3.500-1.500 4-6 4.500z" fill="#e8c8e0" />
            <path d="M12 12.500q3 3.500 0 7.500-3-4 0-7.500z" fill="#7ae6e0" />
          </svg>
          <span className="pointer-events-none absolute right-1 text-[#e0e0e0]"><BigChevron /></span>
        </label>
      </div>
      <div className="mr-px w-[18px] bg-[#434343]" />
    </div>
  </section>
);

const iconToggle = 'flex h-6 w-6 items-center justify-center';

const LayerPanel = () => (
  <section className="shrink-0 border-b border-[#303030] bg-[#4d4d4d] pb-[2px]">
    <PaletteHeader
      strip={false}
      tabs={[
        { icon: icons.layers, label: 'Layer', width: 'w-[82px]' },
        { icon: icons.history, label: 'History', width: 'w-[94px]' },
        { icon: icons.autoAction, label: 'Auto Action', width: 'w-[123px]' },
      ]}
    />
    <div className="flex items-center pl-[2px] pr-1.5 pt-2 text-[#c8c8c8]">
      <button aria-label="Palette color" className="flex h-[30px] w-[58px] items-center justify-between rounded-sm border border-[#858585] bg-[#636363] pl-[5px] pr-[3px]">
        <span className="h-[22px] w-[25px] rounded-sm border border-[#c8c8c8]" />
        <BigChevron />
      </button>
      <label className="relative ml-[5px] flex h-[30px] w-[115px] items-center">
        <select aria-label="Blending mode" className="h-full w-full appearance-none rounded-sm border border-[#858585] bg-[#636363] pl-[22px] font-[Roboto,sans-serif] text-[16px] text-[#d6d6d6]">
          <option>Normal</option>
          <option>Multiply</option>
          <option>Screen</option>
        </select>
        <span className="pointer-events-none absolute right-1"><BigChevron /></span>
      </label>
      <div className="relative ml-[9px] h-[14px] flex-1 bg-[repeating-conic-gradient(#b8b8b8_0_25%,#fff_0_50%)] bg-[length:10px_10px]">
        <div className="absolute inset-0 bg-linear-to-r from-transparent to-[#b8b8b8]" />
        <input type="range" aria-label="Opacity" min={0} max={100} defaultValue={100} className={`${rangeBase} -top-2 h-[30px] [&::-webkit-slider-thumb]:h-[30px]`} />
      </div>
      <input type="text" aria-label="Opacity value" defaultValue="100" className={`${numberField} w-[33px]`} />
      <div className="ml-[3px] flex flex-col gap-1">
        <button aria-label="Increase opacity"><Icon w={13} h={8}><path d="M1 7 6.500 1.500 12 7" /></Icon></button>
        <button aria-label="Decrease opacity"><Icon w={13} h={8}><path d="M1 1l5.500 5.500L12 1" /></Icon></button>
      </div>
    </div>
    <div className="flex items-center justify-end pt-[2px] text-[#b1b1b1]">
      <div className="mr-[3px] flex items-center gap-[6px]">
        <button aria-label="Clip to layer below" className={iconToggle}><Icon w={22} h={22}><path d="M2.500 6q-1 1-1 3v8q0 3.500 3.500 3.500h8q2 0 3-1.500" strokeWidth="2.5" opacity=".7" /><path d="M5.500 5V1h15v15h-3" strokeDasharray="3 2" strokeLinecap="butt" /><rect x="5" y="5.5" width="12" height="12" rx="1.5" {...solid} /></Icon></button>
        <button aria-label="Reference layer" className={iconToggle}><Icon w={24} h={24}><path d="M10 10h4.500l2.500 13H7.500zM9 7h6v2H9z" {...solid} /><path d="M9.500 4.500h5V9h-5zM9 5 2 2M9 7 2 9.500M15 5l7-3M15 7l7 2.500M12 1v3" strokeWidth="1.2" /></Icon></button>
        <button aria-label="Draft layer" className={iconToggle}><Icon w={22} h={22}><path d="M2 1h11v9l-4 9-2 1L2 9z" {...solid} /><path d="M5 8q1-3 2.500 0Q9 5 11 8l-3.500 6z" fill="#4d4d4d" stroke="none" /><path d="M8 19.500q3-.5 5-4.500 4-1 3 2.500-1 3 4.500 1.500" strokeWidth="1.8" /></Icon></button>
        <button aria-label="Lock layer" className={iconToggle}><Icon w={20} h={22}><rect x="2.5" y="9" width="15" height="12" rx="1.5" {...solid} /><path d="M6 9V6q0-4.500 4-4.500T14 6v3" strokeWidth="2" /></Icon></button>
        <button aria-label="Lock transparent pixels" className={iconToggle}><Icon w={24} h={22}><path d="M5 1h6v6H5zM17 1h5v6h-5zM11 7h6v6h-6zM17 13h5v6h-5z" {...solid} opacity=".8" /><path d="M2 12h10v9H2z" {...solid} /><path d="M4.500 12v-2q0-2.500 2.500-2.500T9.500 10v2" strokeWidth="1.8" /></Icon></button>
      </div>
      <div className="flex gap-[2px]">
        <button aria-label="Mask" disabled className="flex h-[30px] w-[54px] items-center justify-between rounded-sm bg-[#515151] pl-[7px] pr-[5px] text-[#6c6c6c]">
          <Icon w={24} h={24}><path fillRule="evenodd" d="M3 1h17q2 0 2 2v9h-3a7 7 0 1 0-6 7v3H3q-2 0-2-2V3q0-2 2-2z" {...solid} /><path d="m14 14 9 8M23 14l-9 8" strokeWidth="2" /></Icon>
          <Icon w={12} h={8}><path d="M1 1.500 6 6.500l5-5" /></Icon>
        </button>
        <button aria-label="Ruler" disabled className="flex h-[30px] w-[54px] items-center justify-between rounded-sm bg-[#515151] pl-[7px] pr-[5px] text-[#6c6c6c]">
          <Icon w={24} h={24}><path fillRule="evenodd" d="M1 1h21L1 22zM5 5v8l8-8z" {...solid} /><path d="m14 14 9 8M23 14l-9 8" strokeWidth="2" /></Icon>
          <Icon w={12} h={8}><path d="M1 1.500 6 6.500l5-5" /></Icon>
        </button>
        <button aria-label="Layer color" className="flex h-[30px] w-[54px] items-center justify-between rounded-sm border border-[#858585] bg-[#636363] pl-[5px] pr-[5px]">
          <Icon w={22} h={22}><rect x="7" y="7" width="14" height="14" fill="#fff" stroke="#999" strokeWidth="1" /><rect x=".5" y=".5" width="15" height="15" fill="#3b8cee" stroke="#ddd" strokeWidth="1" /></Icon>
          <BigChevron />
        </button>
      </div>
    </div>
    <div className="flex h-[36px] items-center gap-[6px] pl-1 pr-[3px] text-[#b1b1b1]">
      <button aria-label="Two pane view" className="mr-auto"><Icon w={22} h={20}><rect x="1" y="1" width="20" height="18" rx="2" /><path d="M1 10h20M4 4.500h2M4 7h2M4 13.500h2M4 16h2" strokeWidth="1.2" /></Icon></button>
      <button aria-label="New raster layer" className={iconToggle}><Icon w={24} h={24}><path d="M21 11V3q0-1.500-1.500-1.500h-17Q1 1.500 1 3v12l6 6h6" /><path d="M1 15q4 1 6 6H1z" {...solid} /><Plus x={18} y={18} /></Icon></button>
      <button aria-label="New 3D layer" className={iconToggle}><Icon w={24} h={24}><path d="M21 11V3q0-1.500-1.500-1.500h-17Q1 1.500 1 3v12l6 6h6M11.500 5l5 2.500V13l-5 2.500-5-2.500V7.500zM6.500 7.500l5 2.500 5-2.500M11.500 10v5.500" strokeWidth="1.3" /><path d="M1 15q4 1 6 6H1z" {...solid} /><Plus x={18} y={18} /></Icon></button>
      <button aria-label="New folder" className={iconToggle}><Icon w={24} h={24}><path d="M1 18V2.500Q1 1.500 2 1.500h5.500L10 5h9.500q1 0 1 1v2" /><path d="M2 8h18q1 0 1 1v12H3q-2 0-2-2V9q0-1 1-1z" {...solid} /><Plus x={18} y={18} /></Icon></button>
      <button aria-label="Transfer to layer below" disabled className={`${iconToggle} text-[#6c6c6c]`}><Icon w={24} h={24}><rect x="10.5" y="1" width="12" height="12" rx="1" /><path d="M14 4.500h5v5h-5z" {...solid} /><path d="M7 9H2.500Q1 9 1 10.500V21q0 1.500 1.500 1.500H13q1.500 0 1.500-1.500v-4" /><path d="M14 11q0 6-5 6M9 14l-4 3 4 3z" /></Icon></button>
      <button aria-label="Merge with layer below" className={iconToggle}><Icon w={24} h={24}><path d="M10 8V2.500Q10 1 11.500 1H21q1.500 0 1.500 1.500v9q0 1.500-1.500 1.500h-5M7 9.500H2.500Q1 9.500 1 11v10q0 1.500 1.500 1.500h10q1.500 0 1.500-1.500v-3M14 9l-7 7.500M6 11.500v6h6" /></Icon></button>
      <button aria-label="Create layer mask" className={iconToggle}><Icon w={22} h={22}><path fillRule="evenodd" d="M2.500 1h17Q21 1 21 2.500v17q0 1.500-1.500 1.500h-17Q1 21 1 19.500v-17Q1 1 2.500 1zM11 5a6 6 0 1 0 0 12 6 6 0 1 0 0-12z" {...solid} /></Icon></button>
      <button aria-label="Apply mask to layer" disabled className="flex h-6 w-[26px] items-center justify-center text-[#6c6c6c]"><Icon w={26} h={22}><path d="M20 5V2.500Q20 1 18.500 1h-16Q1 1 1 2.500v17Q1 21 2.500 21H11M4 11h7M7.500 8 4 11l3.500 3z" /><path fillRule="evenodd" d="M12.500 6.500h12q1 0 1 1v12q0 1-1 1h-12q-1 0-1-1v-12q0-1 1-1zM18.500 9.500a4 4 0 1 0 0 8 4 4 0 1 0 0-8z" {...solid} /></Icon></button>
      <button aria-label="Delete layer" className="flex h-6 w-[22px] items-center justify-center"><Trash /></button>
    </div>
    <div className="flex h-[50px] border-t border-[#303030] bg-[#3f3f3f] pl-px pr-px text-[#b1b1b1]">
      <div className="flex flex-1 border-b-2 border-[#252525]">
        <button aria-label="Toggle visibility" className="flex w-[30px] items-center justify-center border-r-2 border-[#252525]">
          <Icon w={22} h={14}><path d="M1 10Q5 1.500 11 1.500T21 10" strokeWidth="1.8" /><circle cx="11" cy="7.5" r="4.5" {...solid} /></Icon>
        </button>
        <button aria-label="Editing target" className="flex w-[28px] items-center justify-center border-r-2 border-[#252525]">
          <Icon w={22} h={22}><path d="m5.500 15 12-12.500" strokeWidth="4" /><path d="m3 14 4 4-6 2z" {...solid} /><path d="M2 20.500h19" /></Icon>
        </button>
        <button className="flex flex-1 items-center gap-[11px] bg-[#5e6880] pl-[7px] text-left font-[Roboto,sans-serif] text-[16px] leading-[18px] text-[#d8d8d8]">
          <span className="h-[32px] w-10 border-2 border-[#e8e8e8] bg-[#11100e] ring-1 ring-inset ring-[#5e6880]" />
          <span>100 % Normal<br />Layer 1</span>
        </button>
      </div>
      <Scrollbar />
    </div>
  </section>
);

const menu = ['File', 'Edit', 'Story(P)', 'Animation', 'Layer', 'Select', 'View', 'Filter', 'Window', 'Help'];

export default function App() {
  return (
    <div className="flex h-screen flex-col overflow-hidden bg-[#383838] pb-2">
      <header className="relative flex h-9 shrink-0 items-center justify-center font-['Noto_Sans',sans-serif] text-[17px] text-[#9a9a9a]">
        <h1 className="whitespace-pre pt-[3px]">Illustration* (1600 x 1200px 72dpi 156.0%)  Trial version: You can use limited features. - CLIP STUDIO PAINT EX</h1>
        <div className="absolute right-3 top-2 flex gap-[10px] text-[#b1b1b1]">
          <button aria-label="Minimize"><Icon w={18} h={18}><path d="M3 16h13" strokeWidth="1.8" /></Icon></button>
          <button aria-label="Maximize"><Icon w={18} h={18}><rect x="3" y="2" width="13" height="13" rx="1" /></Icon></button>
          <button aria-label="Close"><Icon w={18} h={18}><path d="m3 3 12 12M15 3 3 15" /></Icon></button>
        </div>
      </header>
      <nav className="mx-2 flex h-9 shrink-0 items-center gap-8 bg-[#4d4d4d] pl-5 pt-px font-['Noto_Sans',sans-serif] text-[17px] text-[#e0e0e0]">
        {menu.map((item) => (
          <button key={item}>{item}</button>
        ))}
      </nav>
      <main className="flex min-h-0 flex-1 px-2">
        <ToolColumn />
        <PaletteColumn />
        <CanvasColumn />
        <MaterialColumn />
        <div className="flex w-[362px] shrink-0 flex-col">
          <div className="flex h-[30px] shrink-0 items-center pl-1.5 pr-[3px] text-[#6e6e6e]">
            <Grip />
            <span className="ml-auto mr-[27px]"><Right /></span>
            <DoubleRight />
          </div>
          <div className="flex min-h-0 flex-1 flex-col border-x border-[#303030]">
            <NavigatorPanel />
            <LayerPropertyPanel />
            <LayerPanel />
          </div>
        </div>
      </main>
    </div>
  );
}
